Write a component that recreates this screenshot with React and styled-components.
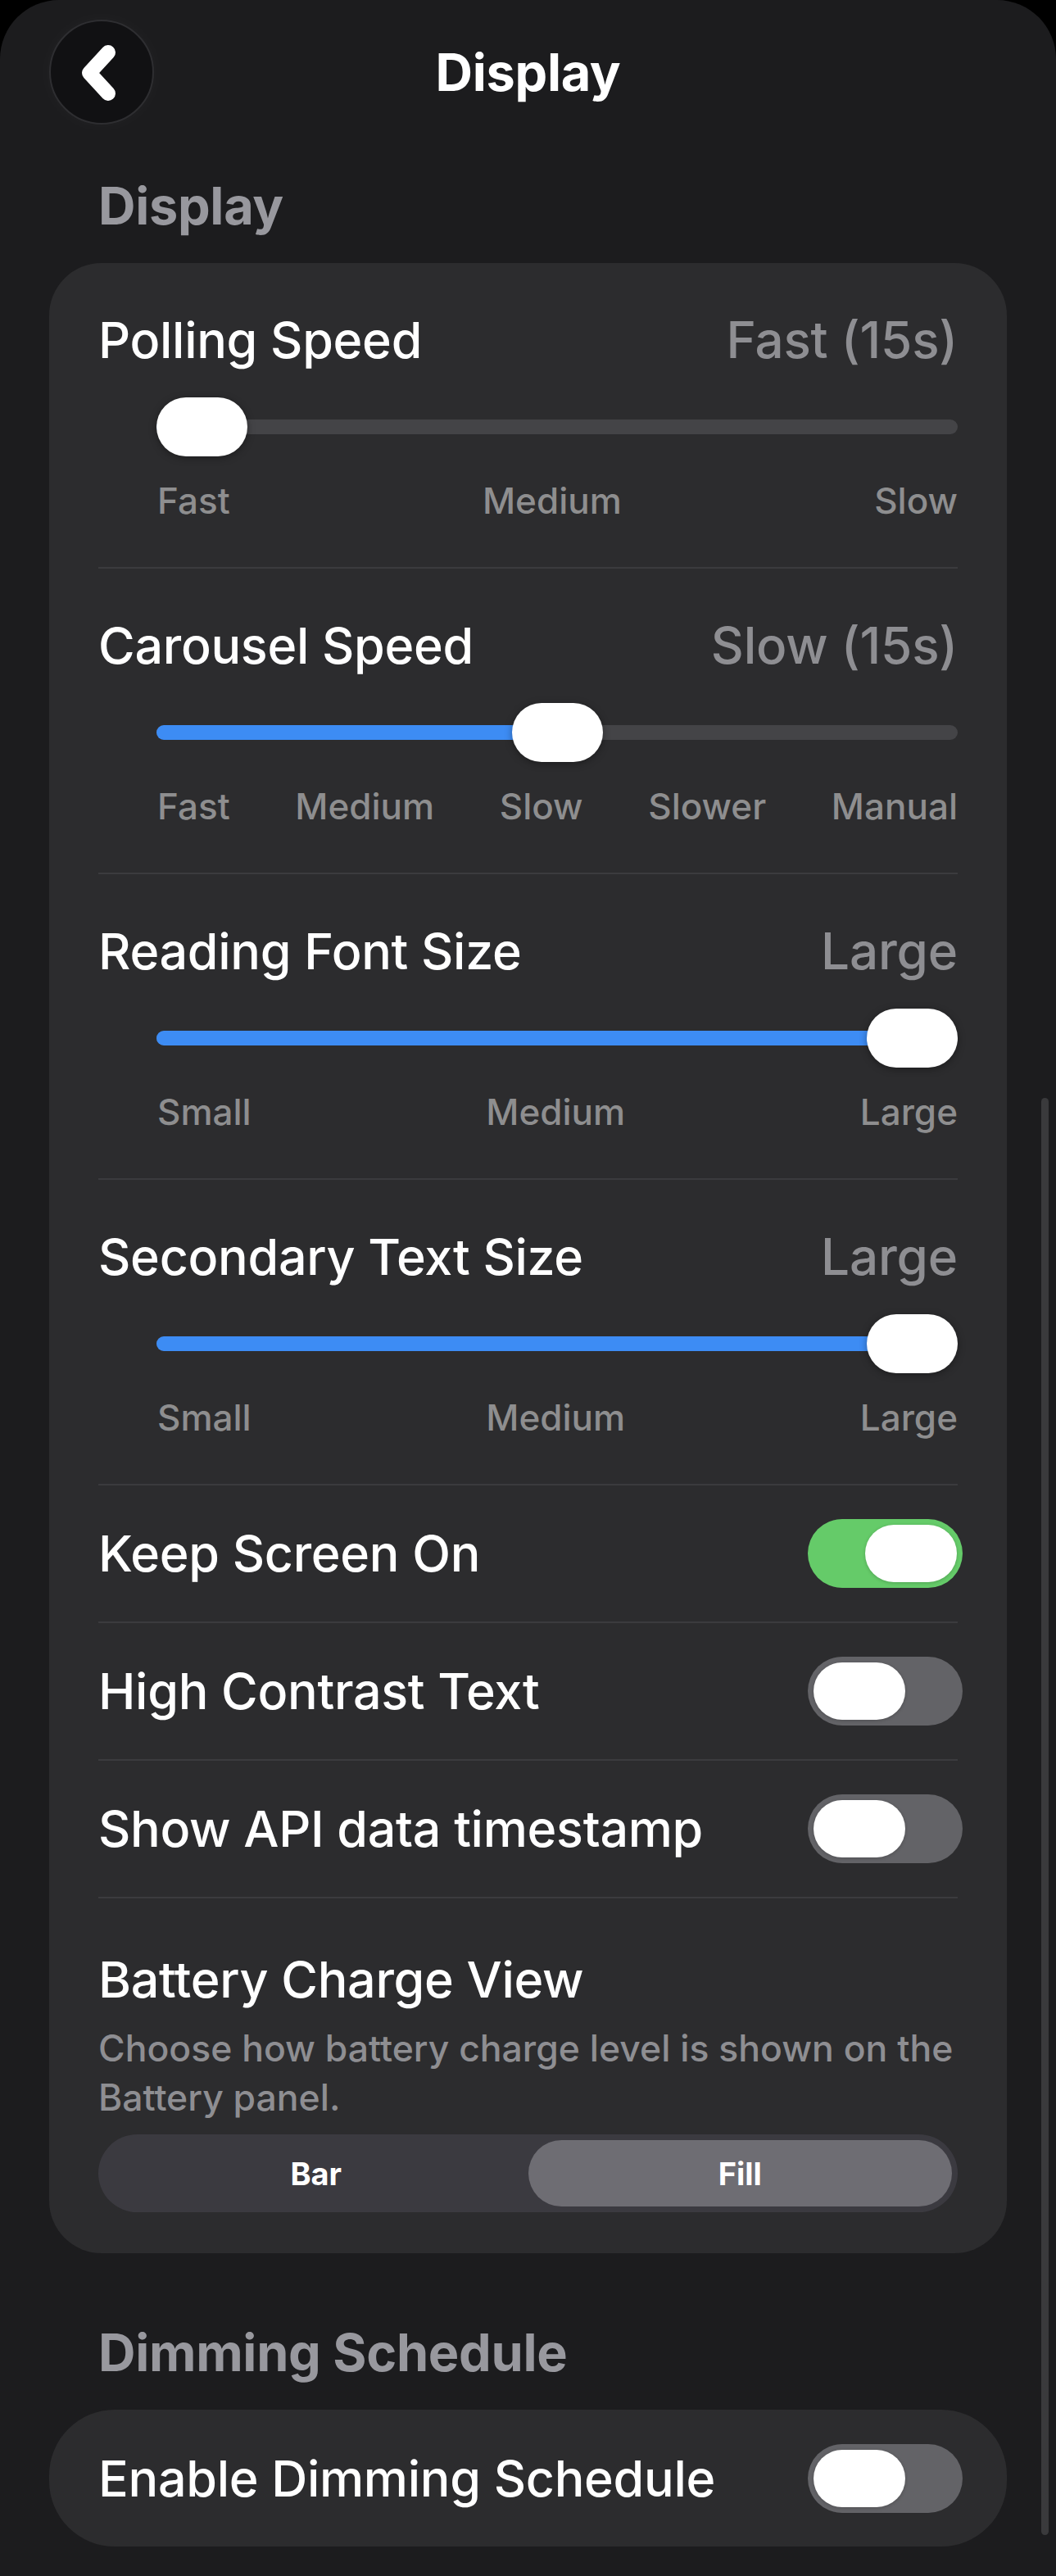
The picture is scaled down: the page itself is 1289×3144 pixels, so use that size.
import React from "react";
import styled, { createGlobalStyle } from "styled-components";

const GlobalStyle = createGlobalStyle`
    html, body {
        margin: 0;
        padding: 0;
        background: #000;
    }
    body {
        font-family: Inter, "Noto Sans", "Liberation Sans", sans-serif;
        -webkit-font-smoothing: antialiased;
    }
    * {
        box-sizing: border-box;
    }
`

const sliders = [
    { title: "Polling Speed", value: "Fast (15s)", labels: ["Fast", "Medium", "Slow"], pos: 0 },
    { title: "Carousel Speed", value: "Slow (15s)", labels: ["Fast", "Medium", "Slow", "Slower", "Manual"], pos: 0.5 },
    { title: "Reading Font Size", value: "Large", labels: ["Small", "Medium", "Large"], pos: 1 },
    { title: "Secondary Text Size", value: "Large", labels: ["Small", "Medium", "Large"], pos: 1 },
]

const toggles = [
    { title: "Keep Screen On", on: true },
    { title: "High Contrast Text", on: false },
    { title: "Show API data timestamp", on: false },
]

const Toggle = ({ on }) => (
    <Switch $on={on}>
        <Knob />
    </Switch>
)

const Slider = ({ pos }) => (
    <SliderBox>
        <Track>
            <Fill style={{ width: `calc(${pos} * (100% - 111px) + 55px)` }} />
        </Track>
        <Thumb style={{ left: `calc(${pos} * (100% - 111px))` }} />
    </SliderBox>
)

const App = () => {
    return (
        <>
            <GlobalStyle />
            <Page>
                <Header>
                    <BackButton>
                        <svg width="128" height="128" viewBox="0 0 128 128">
                            <path d="M72 40 L49 65 L72 90" fill="none" stroke="#fff" strokeWidth="18" strokeLinecap="round" strokeLinejoin="round" />
                        </svg>
                    </BackButton>
                    <Title>Display</Title>
                    <span />
                </Header>

                <SectionTitle>Display</SectionTitle>
                <Card>
                    {sliders.map((s) => (
                        <SliderRow key={s.title}>
                            <RowHead>
                                <Label>{s.title}</Label>
                                <Value>{s.value}</Value>
                            </RowHead>
                            <Slider pos={s.pos} />
                            <Ticks>
                                {s.labels.map((l) => (
                                    <Tick key={l}>{l}</Tick>
                                ))}
                            </Ticks>
                        </SliderRow>
                    ))}

                    {toggles.map((t) => (
                        <ToggleRow key={t.title}>
                            <Label>{t.title}</Label>
                            <Toggle on={t.on} />
                        </ToggleRow>
                    ))}

                    <BatteryRow>
                        <Label>Battery Charge View</Label>
                        <Description>Choose how battery charge level is shown on the Battery panel.</Description>
                        <Segmented>
                            <Segment>Bar</Segment>
                            <Segment $active>Fill</Segment>
                        </Segmented>
                    </BatteryRow>
                </Card>

                <SectionTitle $gap={84}>Dimming Schedule</SectionTitle>
                <PillCard>
                    <Label>Enable Dimming Schedule</Label>
                    <Toggle on={false} />
                </PillCard>

                <ScrollBar />
            </Page>
        </>
    )
}

export default App;

const Page = styled.div`
    position: relative;
    width: 1289px;
    min-height: 3144px;
    background: #1c1c1e;
    border-radius: 72px 72px 0 0;
    padding: 24px 60px 38px;
    display: flex;
    flex-direction: column;
`

const Header = styled.div`
    display: grid;
    grid-template-columns: 128px 1fr 128px;
    align-items: center;
    height: 128px;
`

const BackButton = styled.div`
    width: 128px;
    height: 128px;
    border-radius: 50%;
    background: #111113;
    border: 2px solid #2e2e31;
    box-shadow: 0 0 24px rgba(255, 255, 255, 0.03);
    display: flex;
    justify-content: center;
    align-items: center;
    svg {
        margin: -2px;
    }
`

const Title = styled.div`
    text-align: center;
    color: #fff;
    font-size: 63px;
    line-height: 74px;
    font-weight: 700;
    letter-spacing: -0.3px;
`

const SectionTitle = styled.div`
    margin-top: ${(p) => p.$gap || 62}px;
    margin-bottom: 33px;
    padding-left: 60px;
    color: #98989e;
    font-size: 63px;
    line-height: 74px;
    font-weight: 700;
    letter-spacing: -0.3px;
`

const Card = styled.div`
    background: #2c2c2e;
    border-radius: 64px;
    padding: 0 60px;
    display: flex;
    flex-direction: column;
`

const Row = styled.div`
    border-bottom: 2px solid #3b3b3e;
`

const SliderRow = styled(Row)`
    padding: 57px 0 56px;
    display: flex;
    flex-direction: column;
`

const RowHead = styled.div`
    display: flex;
    justify-content: space-between;
    align-items: center;
`

const Label = styled.div`
    color: #fff;
    font-size: 61px;
    line-height: 74px;
    font-weight: 500;
    letter-spacing: -0.3px;
`

const Value = styled.div`
    color: #8e8e92;
    font-size: 62px;
    line-height: 74px;
    font-weight: 500;
    letter-spacing: -0.2px;
`

const SliderBox = styled.div`
    position: relative;
    height: 72px;
    margin: 33px 0 29px 71px;
`

const Track = styled.div`
    position: absolute;
    left: 0;
    right: 0;
    top: 27px;
    height: 18px;
    border-radius: 9px;
    background: #444447;
    overflow: hidden;
`

const Fill = styled.div`
    height: 100%;
    background: #3d8cf4;
`

const Thumb = styled.div`
    position: absolute;
    top: 0;
    width: 111px;
    height: 72px;
    border-radius: 36px;
    background: #fff;
    box-shadow: 0 2px 10px rgba(0, 0, 0, 0.35);
`

const Ticks = styled.div`
    display: flex;
    justify-content: space-between;
    margin-left: 72px;
`

const Tick = styled.div`
    color: #8e8e8f;
    font-size: 44px;
    line-height: 50px;
    font-weight: 500;
`

const ToggleRow = styled(Row)`
    height: 168px;
    display: flex;
    justify-content: space-between;
    align-items: center;
`

const Switch = styled.div`
    width: 189px;
    height: 84px;
    margin-right: -6px;
    padding: 7px;
    border-radius: 42px;
    background: ${(p) => (p.$on ? "#65cb69" : "#636367")};
    display: flex;
    justify-content: ${(p) => (p.$on ? "flex-end" : "flex-start")};
`

const Knob = styled.div`
    width: 112px;
    height: 70px;
    border-radius: 35px;
    background: #fff;
    box-shadow: 0 1px 4px rgba(0, 0, 0, 0.2);
`

const BatteryRow = styled.div`
    padding: 62px 0 50px;
    display: flex;
    flex-direction: column;
`

const Description = styled.div`
    margin-top: 17px;
    color: #8e8e92;
    font-size: 44.5px;
    line-height: 60px;
    font-weight: 500;
`

const Segmented = styled.div`
    margin-top: 15px;
    height: 95px;
    padding: 7px;
    border-radius: 48px;
    background: #3b3a40;
    display: grid;
    grid-template-columns: 1fr 1fr;
`

const Segment = styled.div`
    border-radius: 41px;
    background: ${(p) => (p.$active ? "#6e6d73" : "transparent")};
    color: #fff;
    font-size: 38px;
    font-weight: 700;
    display: flex;
    justify-content: center;
    align-items: center;
`

const PillCard = styled.div`
    height: 167px;
    background: #2c2c2e;
    border-radius: 80px;
    padding: 0 60px;
    display: flex;
    justify-content: space-between;
    align-items: center;
`

const ScrollBar = styled.div`
    position: absolute;
    right: 9px;
    top: 1340px;
    width: 9px;
    height: 1754px;
    border-radius: 5px;
    background: #3a3a3c;
`
